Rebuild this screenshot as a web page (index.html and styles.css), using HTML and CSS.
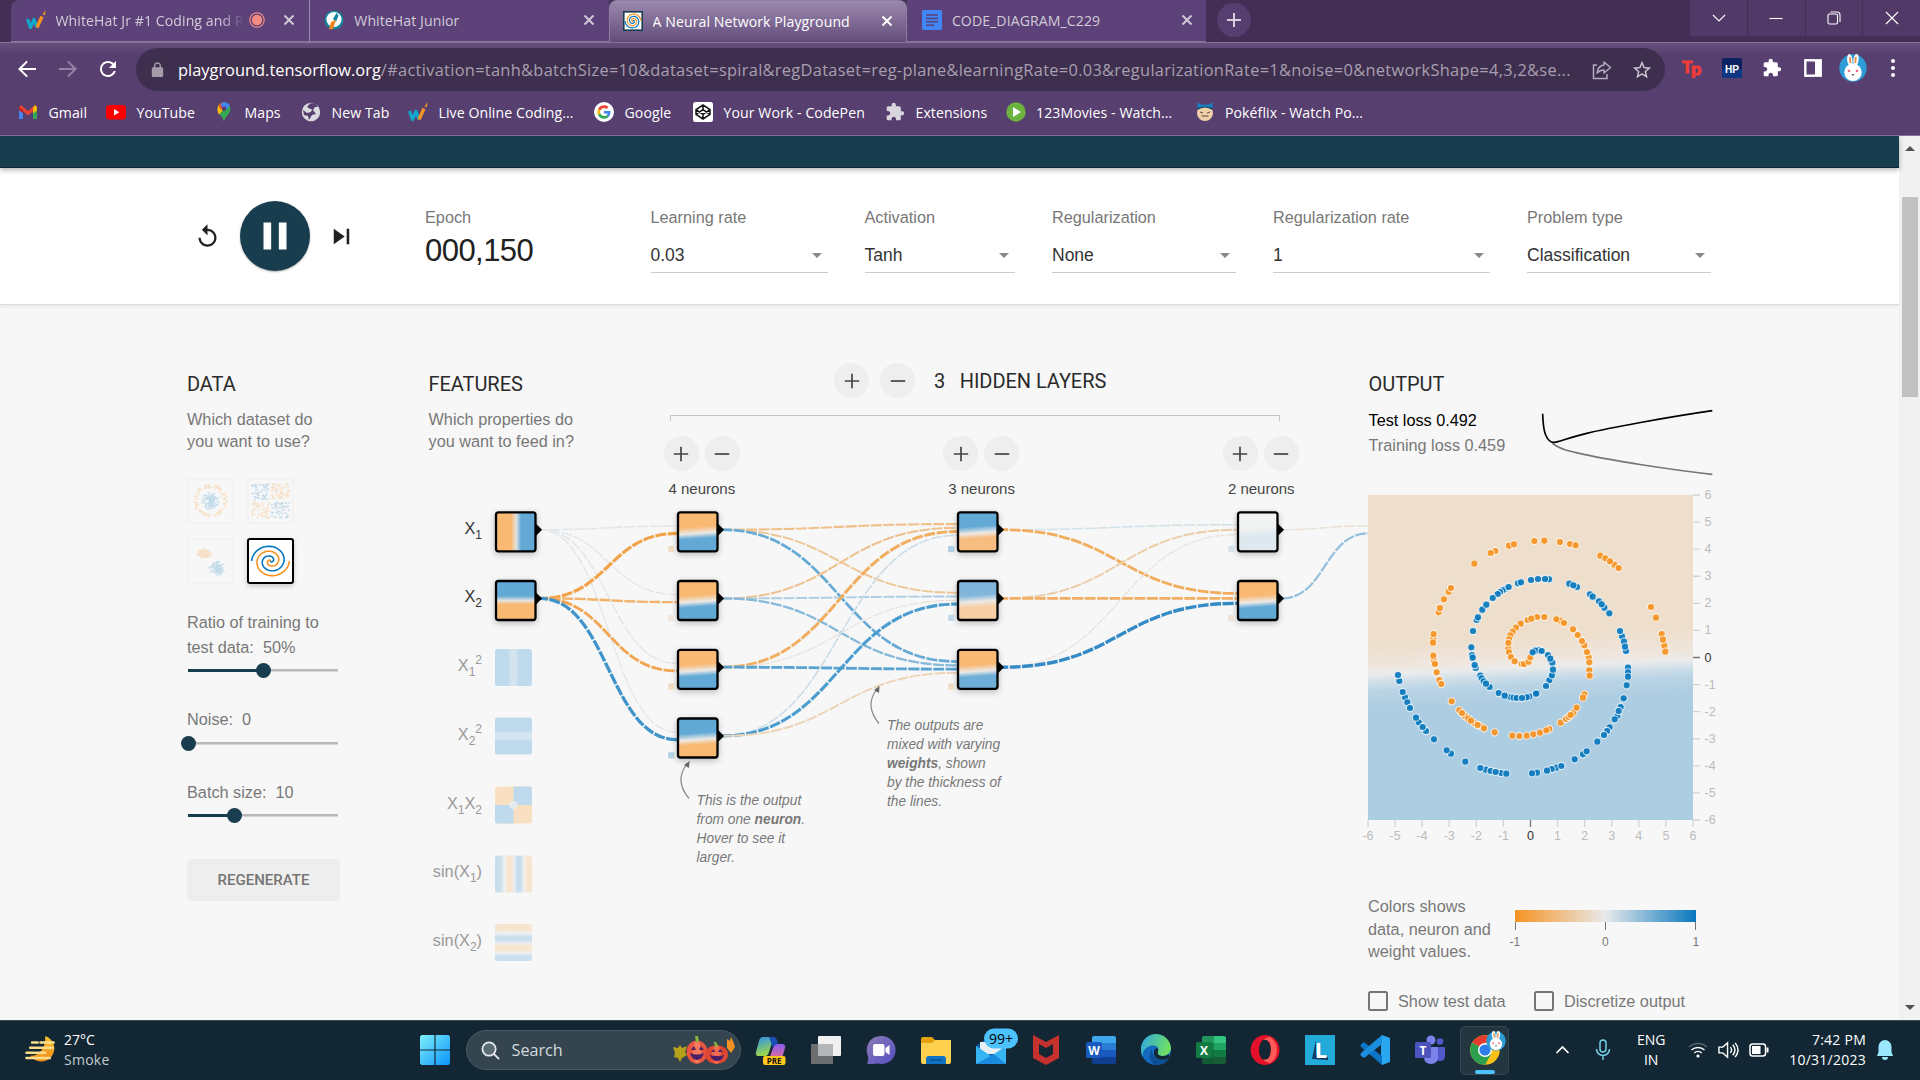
FILE: index.html
```html
<!DOCTYPE html>
<html lang="en">
<head>
<meta charset="utf-8">
<title>A Neural Network Playground</title>
<link rel="stylesheet" href="styles.css">
</head>
<body>
<svg class="defs" width="0" height="0">
  <defs>
    <symbol id="close" viewBox="0 0 12 12"><path d="M1.5 1.5l9 9M10.5 1.5l-9 9" stroke="currentColor" stroke-width="1.9" fill="none"/></symbol>
    <symbol id="whitehat" viewBox="0 0 20 20"><path d="M1.5 9l3 8.500 3.500-8 3 8" fill="none" stroke="#12a9cf" stroke-width="3.200" stroke-linejoin="round"/><path d="M11 17.500l5-11" stroke="#f59322" stroke-width="3.400"/><path d="M16.500 4.500L19.500 0l-.5 5z" fill="#f59322"/></symbol>
    <symbol id="puzzle" viewBox="0 0 24 24"><path fill="currentColor" d="M20.500 11H19V7c0-1.100-.9-2-2-2h-4V3.500C13 2.120 11.880 1 10.500 1S8 2.120 8 3.500V5H4c-1.100 0-1.990.9-1.990 2v3.800H3.500c1.490 0 2.700 1.210 2.700 2.700s-1.210 2.700-2.700 2.700H2V20c0 1.100.9 2 2 2h3.800v-1.500c0-1.490 1.210-2.700 2.700-2.700 1.490 0 2.700 1.210 2.700 2.700V22H17c1.100 0 2-.9 2-2v-4h1.500c1.380 0 2.500-1.120 2.500-2.500S21.880 11 20.500 11z"/></symbol>
    <symbol id="bunny" viewBox="0 0 28 28"><circle cx="14" cy="14" r="13.700" fill="#2e9bd6"/><ellipse cx="10.800" cy="6" rx="2.600" ry="6" fill="#fff" transform="rotate(-6 10.800 6)"/><ellipse cx="17" cy="6" rx="2.600" ry="6" fill="#fff" transform="rotate(8 17 6)"/><path d="M11 3l.5 6M16.800 3l-.5 6" stroke="#f08a3c" stroke-width="1.800"/><circle cx="14" cy="18.300" r="8.700" fill="#fff"/><circle cx="10" cy="17" r="1.300" fill="#ef6a8a"/><circle cx="18" cy="17" r="1.300" fill="#ef6a8a"/><path d="M12.500 20h3L14 22z" fill="#555"/></symbol>
    <symbol id="plus" viewBox="0 0 16 16"><path d="M8 .8v14.400M.8 8h14.400" stroke="currentColor" stroke-width="1.700"/></symbol>
    <symbol id="minus" viewBox="0 0 16 16"><path d="M.8 8h14.400" stroke="currentColor" stroke-width="1.700"/></symbol>
  </defs>
</svg>

<div class="tabstrip">
  <div class="tab first"><svg class="fav"><use href="#whitehat"/></svg><span class="tab-title fade">WhiteHat Jr #1 Coding and R</span>
    <svg class="rec" viewBox="0 0 16 16"><circle cx="8" cy="8" r="5.200" fill="#f28b82"/><circle cx="8" cy="8" r="7.200" fill="none" stroke="#f28b82" stroke-width="1.200"/></svg>
    <svg class="x"><use href="#close"/></svg></div>
  <div class="tab"><svg class="fav" viewBox="0 0 20 20"><circle cx="10" cy="10" r="9.500" fill="#12869c"/><circle cx="10" cy="9.500" r="7.600" fill="#fff"/><path d="M9 9l3.500-6 2 2.500L12 12z" fill="#12869c"/><path d="M7 12l5-2-3 9-4 .5z" fill="#f58220"/></svg><span class="tab-title">WhiteHat Junior</span><svg class="x"><use href="#close"/></svg></div>
  <div class="tab active"><svg class="fav" viewBox="0 0 20 20"><rect x=".8" y=".8" width="18.400" height="18.400" fill="#fff" stroke="#183d4e" stroke-width="1.600"/><path class="spiral-b" fill="none" stroke="#0877bd" stroke-width="1.200"/><path class="spiral-o" fill="none" stroke="#f59322" stroke-width="1.200"/></svg><span class="tab-title">A Neural Network Playground</span><svg class="x"><use href="#close"/></svg></div>
  <div class="tab"><svg class="fav" viewBox="0 0 20 20"><rect width="20" height="20" rx="2" fill="#4285f4"/><path d="M4 5h12M4 8.400h12M4 11.800h12M4 15.200h8" stroke="#5c4278" stroke-width="1.500"/></svg><span class="tab-title">CODE_DIAGRAM_C229</span><svg class="x"><use href="#close"/></svg></div>
  <div class="newtab"><svg viewBox="0 0 16 16"><path d="M8 1v14M1 8h14" stroke="#d8d0df" stroke-width="2"/></svg></div>
  <div class="winbtns">
    <span><svg viewBox="0 0 14 14"><path d="M1 4l6 6 6-6" /></svg></span>
    <span><svg viewBox="0 0 14 14"><path d="M.5 7.500h13"/></svg></span>
    <span><svg viewBox="0 0 14 14"><rect x="1" y="3" width="9.500" height="10" rx="1.500"/><path d="M3.500 1h6.500a3 3 0 0 1 3 3v7"/></svg></span>
    <span><svg viewBox="0 0 14 14"><path d="M1 1l12 12M13 1L1 13"/></svg></span>
  </div>
</div>

<div class="toolbar">
  <div class="nav">
    <svg viewBox="0 0 24 24"><path fill="#fff" d="M21 11H7l5.900-5.900L11.500 3.700 3 12l8.500 8.300 1.400-1.400L7 13H21z"/></svg>
    <svg viewBox="0 0 24 24"><path fill="#9384a3" d="M3 11H17l-5.900-5.900L12.500 3.700 21 12l-8.500 8.300-1.400-1.400L17 13H3z"/></svg>
    <svg viewBox="0 0 24 24"><path fill="#fff" d="M17.650 6.350C16.200 4.900 14.210 4 12 4c-4.420 0-7.990 3.580-7.990 8s3.570 8 7.990 8c3.730 0 6.840-2.550 7.730-6h-2.080c-.82 2.330-3.040 4-5.650 4-3.310 0-6-2.690-6-6s2.690-6 6-6c1.660 0 3.140.69 4.220 1.780L13 11h7V4l-2.350 2.350z"/></svg>
  </div>
  <div class="omnibox">
    <svg class="lock" viewBox="0 0 24 24"><path fill="#a49da9" d="M18 8h-1V6c0-2.760-2.240-5-5-5S7 3.240 7 6v2H6c-1.100 0-2 .9-2 2v10c0 1.100.9 2 2 2h12c1.100 0 2-.9 2-2V10c0-1.100-.9-2-2-2zM9 8V6c0-1.660 1.340-3 3-3s3 1.340 3 3v2z"/></svg>
    <span class="url"><b>playground.tensorflow.org</b>/#activation=tanh&amp;batchSize=10&amp;dataset=spiral&amp;regDataset=reg-plane&amp;learningRate=0.03&amp;regularizationRate=1&amp;noise=0&amp;networkShape=4,3,2&amp;se...</span>
    <svg class="share" viewBox="0 0 20 20"><path d="M5 5H1.500v13.500H15V14" fill="none" stroke="#b5aabf" stroke-width="1.500"/><path d="M12 2l6.500 5.500L12 13v-3c-3 0-5 1-7 3 .5-4 3-7.500 7-8z" fill="none" stroke="#b5aabf" stroke-width="1.500" stroke-linejoin="round"/></svg>
    <svg class="star" viewBox="0 0 24 24"><path fill="#cfc8d6" d="M22 9.240l-7.190-.62L12 2 9.190 8.630 2 9.240l5.460 4.730L5.820 21 12 17.270 18.180 21l-1.630-7.030L22 9.240zM12 15.400l-3.760 2.270 1-4.280-3.320-2.880 4.380-.38L12 6.100l1.710 4.040 4.380.38-3.320 2.880 1 4.280L12 15.400z"/></svg>
  </div>
  <div class="exts">
    <svg viewBox="0 0 20 20"><text x="0" y="15" class="tp">T</text><text x="9" y="17" class="tp">p</text></svg>
    <svg viewBox="0 0 20 20"><rect width="20" height="20" rx="1.500" fill="#0c2562"/><rect y="11" width="20" height="9" fill="#12469b" opacity=".6"/><text x="10" y="14.800" text-anchor="middle" class="hp" textLength="14" lengthAdjust="spacingAndGlyphs">HP</text></svg>
    <svg viewBox="0 0 24 24" color="#fff"><use href="#puzzle"/></svg>
    <svg viewBox="0 0 20 20"><rect x="2.300" y="2.300" width="15.400" height="15.400" fill="none" stroke="#fff" stroke-width="2.400"/><rect x="12" y="2" width="6" height="16" fill="#fff"/></svg>
    <svg class="big"><use href="#bunny"/></svg>
    <svg viewBox="0 0 20 20" fill="#fff"><circle cx="10" cy="3" r="2"/><circle cx="10" cy="10" r="2"/><circle cx="10" cy="17" r="2"/></svg>
  </div>
</div>

<div class="bookmarks">
  <a><svg viewBox="0 0 20 20"><path d="M1 17V5h4v12z" fill="#4285f4"/><path d="M15 17V5h4v12z" fill="#34a853"/><path d="M1 5.500L3 3l7 6 7-6 2 2.500-9 8z" fill="#ea4335"/><path d="M15 6l2-3 2 2v3.500l-4 3z" fill="#fbbc04"/><path d="M1 5l4 3v3.500L1 8z" fill="#c5221f"/></svg>Gmail</a>
  <a><svg viewBox="0 0 20 20"><rect x="0" y="3" width="20" height="14.500" rx="3.500" fill="#f00"/><path d="M8 7v6.400l5.300-3.200z" fill="#fff"/></svg>YouTube</a>
  <a><svg viewBox="0 0 20 20"><path d="M10 20C9 14 3.500 12 3.500 6.800A6.500 6.500 0 0 1 10 .3a6.500 6.500 0 0 1 6.500 6.500C16.500 12 11 14 10 20z" fill="#34a853"/><path d="M3.500 7A6.500 6.500 0 0 1 5.500 2l9 .2L5 12.500C4 11 3.500 9 3.500 7z" fill="#fbbc04"/><path d="M4.600 3.200A6.500 6.500 0 0 1 10 .3L7 8z" fill="#ea4335"/><path d="M10 .3a6.500 6.500 0 0 1 5.800 3.600L11 9 6.500 2.500A6.500 6.500 0 0 1 10 .3z" fill="#4285f4"/><circle cx="10" cy="6.800" r="2.300" fill="#573f6f"/></svg>Maps</a>
  <a><svg viewBox="0 0 20 20"><circle cx="10" cy="10" r="9.200" fill="#dcdce0"/><path d="M9 1.500L6 5l3 2 2 0-1 3-4 1-4-3 1 5 4 1 1 4 3-5 4-1-3-4 2-3 3 0-3-4z" fill="#573f6f"/></svg>New Tab</a>
  <a><svg><use href="#whitehat"/></svg>Live Online Coding...</a>
  <a><svg viewBox="0 0 20 20"><circle cx="10" cy="10" r="10" fill="#fff"/><g transform="translate(3.300 3.300) scale(.28)"><path fill="#EA4335" d="M24 9.500c3.540 0 6.710 1.220 9.210 3.600l6.850-6.850C35.900 2.380 30.470 0 24 0 14.620 0 6.510 5.380 2.560 13.220l7.980 6.190C12.430 13.720 17.740 9.500 24 9.500z"/><path fill="#4285F4" d="M46.980 24.550c0-1.570-.15-3.090-.38-4.550H24v9.020h12.940c-.58 2.960-2.260 5.480-4.780 7.180l7.730 6c4.510-4.180 7.090-10.360 7.090-17.650z"/><path fill="#FBBC05" d="M10.530 28.590c-.48-1.450-.76-2.990-.76-4.590s.27-3.140.76-4.590l-7.980-6.190C.92 16.460 0 20.120 0 24c0 3.880.92 7.540 2.560 10.780l7.970-6.190z"/><path fill="#34A853" d="M24 48c6.480 0 11.930-2.130 15.890-5.810l-7.730-6c-2.150 1.450-4.920 2.300-8.160 2.300-6.260 0-11.570-4.220-13.470-9.910l-7.980 6.190C6.510 42.620 14.620 48 24 48z"/></g></svg>Google</a>
  <a><svg viewBox="0 0 20 20"><rect width="20" height="20" rx="2.500" fill="#fff"/><path d="M10 3l7 4.600v4.800L10 17l-7-4.600V7.600zM3 7.600l7 4.800 7-4.800M3 12.400l7-4.800 7 4.800M10 3v4.600M10 12.400V17" fill="none" stroke="#111" stroke-width="1.500" stroke-linejoin="round"/></svg>Your Work - CodePen</a>
  <a><svg color="#d9d5de"><use href="#puzzle"/></svg>Extensions</a>
  <a><svg viewBox="0 0 20 20"><circle cx="10" cy="10" r="9.700" fill="#6cb33f"/><path d="M7 5v10l8-5z" fill="#fff"/></svg>123Movies - Watch...</a>
  <a><svg viewBox="0 0 20 20"><path d="M2 1l4 1.500h8L18 1l-1 9H3z" fill="#1d7bc0"/><circle cx="10" cy="11" r="8" fill="#f0d0a8"/><path d="M2.500 8q7.500-5 15 0L17 4H3z" fill="#17445f"/><path d="M3 1l4 2h6l4-2v5Q10 3 3 6z" fill="#1d7bc0"/><path d="M5 10l3 1M15 10l-3 1M6.500 14h7" stroke="#5c4a3a" stroke-width="1"/></svg>Pokéflix - Watch Po...</a>
</div>

<div class="viewport">
  <div class="page">
    <header class="banner"></header>
    <section class="controls">
      <div class="timeline">
        <svg class="reset" viewBox="0 0 24 24"><path d="M12 5V1L7 6l5 5V7c3.310 0 6 2.690 6 6s-2.690 6-6 6-6-2.690-6-6H4c0 4.420 3.580 8 8 8s8-3.580 8-8-3.580-8-8-8z"/></svg>
        <div class="play"><svg viewBox="0 0 24 24"><path fill="#fff" d="M6 19h4V5H6v14zm8-14v14h4V5h-4z"/></svg></div>
        <svg class="step" viewBox="0 0 24 24"><path d="M6 18l8.500-6L6 6v12zM16 6v12h2V6h-2z"/></svg>
      </div>
      <div class="epoch"><label>Epoch</label><output>000,150</output></div>
      <div class="field w1"><label>Learning rate</label><div class="select">0.03</div></div>
      <div class="field w2"><label>Activation</label><div class="select">Tanh</div></div>
      <div class="field w3"><label>Regularization</label><div class="select">None</div></div>
      <div class="field w4"><label>Regularization rate</label><div class="select">1</div></div>
      <div class="field w3"><label>Problem type</label><div class="select">Classification</div></div>
    </section>

    <main>
      <section class="data">
        <h4>Data</h4>
        <p>Which dataset do<br>you want to use?</p>
        <div class="datasets">
          <svg id="ds-circle" viewBox="0 0 40 40"></svg><svg id="ds-xor" viewBox="0 0 40 40"></svg>
          <svg id="ds-gauss" viewBox="0 0 40 40"></svg><svg class="selected" viewBox="0 0 20 20"><path class="spiral-b flip" fill="none" stroke="#0877bd" stroke-width=".75"/><path class="spiral-o flip" fill="none" stroke="#f59322" stroke-width=".75"/></svg>
        </div>
        <div class="param">Ratio of training to<br>test data:&nbsp; 50%<div class="slider"><i style="width:50%"></i><b></b></div></div>
        <div class="param">Noise:&nbsp; 0<div class="slider"><i style="width:0%"></i><b></b></div></div>
        <div class="param">Batch size:&nbsp; 10<div class="slider"><i style="width:31%"></i><b></b></div></div>
        <button>Regenerate</button>
      </section>

      <section class="features">
        <h4>Features</h4>
        <p>Which properties do<br>you want to feed in?</p>
        <ul>
          <li class="on">X<sub>1</sub></li><li class="on">X<sub>2</sub></li><li>X<sub>1</sub><sup>2</sup></li><li>X<sub>2</sub><sup>2</sup></li><li>X<sub>1</sub>X<sub>2</sub></li><li>sin(X<sub>1</sub>)</li><li>sin(X<sub>2</sub>)</li>
        </ul>
      </section>

      <section class="layers">
        <div class="layers-head"><span class="round"><svg><use href="#plus"/></svg></span><span class="round"><svg><use href="#minus"/></svg></span><h4><span>3</span>Hidden layers</h4></div>
        <div class="bracket"></div>
        <div class="layer-cols">
          <div><span class="round"><svg><use href="#plus"/></svg></span><span class="round"><svg><use href="#minus"/></svg></span><p>4 neurons</p></div>
          <div><span class="round"><svg><use href="#plus"/></svg></span><span class="round"><svg><use href="#minus"/></svg></span><p>3 neurons</p></div>
          <div><span class="round"><svg><use href="#plus"/></svg></span><span class="round"><svg><use href="#minus"/></svg></span><p>2 neurons</p></div>
        </div>
      </section>

      <section class="result">
        <div class="result-head">
          <div><h4>Output</h4><p class="test">Test loss 0.492</p><p>Training loss 0.459</p></div>
          <svg class="loss" viewBox="600 140 525 210"><path d="M637 248C660 268 690 273 750 286S980 327 1117 342" stroke="#777" /><path d="M608 160C609 190 611 210 617 224S632 247 643 246C660 244 675 235 740 219S980 171 1117 151" stroke="#000"/></svg>
        </div>
        <svg class="heatmap" id="heatmap" viewBox="0 0 353 353">
          <defs><linearGradient id="hm" gradientUnits="userSpaceOnUse" x1="156.500" y1="130" x2="160.600" y2="218"><stop offset="0" stop-color="#eedfcd"/><stop offset=".14" stop-color="#eedfcd"/><stop offset=".26" stop-color="#efe2d5"/><stop offset=".37" stop-color="#efe5dc"/><stop offset=".48" stop-color="#ecebea"/><stop offset=".57" stop-color="#cfdfe9"/><stop offset=".68" stop-color="#b9d3e4"/><stop offset=".88" stop-color="#adcde2"/></linearGradient></defs>
          <rect width="325" height="325" fill="url(#hm)"/>
        </svg>
        <div class="legend"><p>Colors shows<br>data, neuron and<br>weight values.</p>
          <div class="scale"><div class="ramp"></div><div class="ticks"><i></i><i></i><i></i></div><div class="nums"><span>-1</span><span>0</span><span>1</span></div></div></div>
        <div class="checks"><span><i></i>Show test data</span><span><i></i>Discretize output</span></div>
      </section>

      <svg class="network" id="network" viewBox="0 305 1899 715"></svg>
      <div class="callout c1">This is the output<br>from one <b>neuron</b>.<br>Hover to see it<br>larger.</div>
      <div class="callout c2">The outputs are<br>mixed with varying<br><b>weights</b>, shown<br>by the thickness of<br>the lines.</div>
    </main>
  </div>
  <div class="scrollbar"><svg viewBox="0 0 10 6"><path d="M0 6l5-5 5 5z"/></svg><i></i><svg viewBox="0 0 10 6"><path d="M0 0l5 5 5-5z"/></svg></div>
</div>

<div class="taskbar">
  <div class="weather"><svg viewBox="0 0 32 32"><defs><linearGradient id="moon" x2="0" y2="1"><stop offset="0" stop-color="#fbc02d"/><stop offset="1" stop-color="#f08a1c"/></linearGradient></defs><path d="M21 1a14 14 0 1 1-16 21C14 23 22 14 21 1z" fill="url(#moon)"/><path d="M7 8h6M16 8h14M5 13.500h24M1 19h20M1 24.500h25" stroke="#fadf8b" stroke-width="2.600" stroke-linecap="round"/></svg><p>27°C<br><span>Smoke</span></p></div>
  <svg class="start" viewBox="0 0 30 30"><defs><linearGradient id="win" x2="1" y2="1"><stop offset="0" stop-color="#7ff0fb"/><stop offset="1" stop-color="#0a93fb"/></linearGradient></defs><path fill="url(#win)" d="M1.500 0H14.400V14.400H0V1.500zM15.600 0H28.500L30 1.500V14.400H15.600zM0 15.600H14.400V30H1.500L0 28.500zM15.600 15.600H30V28.500L28.500 30H15.600z"/></svg>
  <div class="search"><svg viewBox="0 0 20 20"><circle cx="8.500" cy="8.500" r="7" fill="#5a6a73" stroke="#e6eaec" stroke-width="1.800"/><path d="M13.500 13.500l5 5" stroke="#e6eaec" stroke-width="2" stroke-linecap="round"/></svg><span>Search</span>
    <svg class="pumpkin" viewBox="0 0 62 30"><path d="M0 12l5 1 2-3 2 3 5-2-2 6 2 3-5 3-2 4-2-4-4-1 1-4z" fill="#b7a11b"/><path d="M54 4l3 2 1-4 2 4 2 6-4 6-4-5z" fill="#f59322"/><ellipse cx="24" cy="17" rx="10.500" ry="11.500" fill="#e8553f"/><ellipse cx="24" cy="17" rx="4" ry="11.500" fill="#f47a5c"/><path d="M23 7l-1-6 3 0 1 6z" fill="#8bb63c"/><path d="M18 15l3-4 2 4zM26 15l2-4 3 4zM17 18q7 3 14 0-2 7-7 7t-7-7z" fill="#4a1f66"/><ellipse cx="43.500" cy="19.500" rx="11.500" ry="9.500" fill="#dd4633"/><ellipse cx="43.500" cy="19.500" rx="4.500" ry="9.500" fill="#f26b50"/><path d="M42 12q0-4-2-5h3q2 2 2 5z" fill="#8bb63c"/><path d="M38 17l3-3 1 3zM45 17l2-3 3 3zM37 20q7 2 14 0-2 6-7 6t-7-6z" fill="#4a1f66"/></svg></div>
  <div class="apps">
    <svg viewBox="0 0 30 30"><defs><linearGradient id="cp1" x2=".3" y2="1"><stop offset="0" stop-color="#2a8ff0"/><stop offset="1" stop-color="#9ed84a"/></linearGradient><linearGradient id="cp2" y2="1" x2="0"><stop offset="0" stop-color="#8a5cf0"/><stop offset="1" stop-color="#f4717c"/></linearGradient></defs><path d="M7 2h11l-5 15q-1 4-4 4H3q-4 0-3-4L3 6q1-4 4-4z" fill="url(#cp1)"/><path d="M22 9h4q4 0 3 4l-3 10q-1 4-5 4H12l5-14q1-4 5-4z" fill="url(#cp2)"/><path d="M13 2h5q2 0 3 3l1 4q-4 0-5 4z" fill="#1b4fb5"/><rect x="7" y="21" width="22.500" height="9" rx="2" fill="#ffc61a"/><text x="18.200" y="28.600" text-anchor="middle" class="pre">PRE</text></svg>
    <svg viewBox="0 0 30 30"><rect x="0" y="9" width="22" height="20" rx="1" fill="#6c6e70"/><rect x="7" y="1" width="23" height="20" rx="1" fill="#f1f1f1"/><rect x="7" y="9" width="15" height="12" fill="#b5b6b7"/></svg>
    <svg viewBox="0 0 30 30"><defs><linearGradient id="ch" x2="1" y2="1"><stop offset="0" stop-color="#8d7ab5"/><stop offset="1" stop-color="#5450c4"/></linearGradient></defs><path d="M15 1a14 14 0 1 1-3 27.500Q6 29 1 29q2-4 1-8A14 14 0 0 1 15 1z" fill="url(#ch)"/><rect x="7" y="9" width="11.500" height="12" rx="2" fill="#fff"/><path d="M19.500 13l4-3v10l-4-3z" fill="#fff"/></svg>
    <svg viewBox="0 0 30 30"><path d="M0 4q0-2 2-2h9l3 3v4H0z" fill="#e5a00d"/><path d="M0 8h11l3-3h16v22q0 2-2 2H2q-2 0-2-2z" fill="#fdd04e"/><path d="M5 29v-5q0-3 3-3h14q3 0 3 3v5z" fill="#1173c4"/><path d="M9 25h12" stroke="#0a4f93" stroke-width="1.500"/></svg>
    <svg viewBox="0 0 30 30" class="mail"><path d="M0 11L10 4h10l10 7v18H0z" fill="#0f5ba8"/><path d="M4 7h22v12H4z" fill="#e8eef2"/><path d="M0 11l15 10 15-10v18H0z" fill="#37b5f2"/><path d="M0 29L18 19l12 10z" fill="#1b8be0"/><rect x="8" y="-6.500" width="34" height="20" rx="10" fill="#4cc2ff"/><text x="25" y="9" text-anchor="middle" class="badge">99+</text></svg>
    <svg viewBox="0 0 30 30"><path d="M2 0l13 7L28 0v23l-13 7L2 23zM8 9v10l7 4 7-4V9l-7 4z" fill="#c5312c" fill-rule="evenodd"/></svg>
    <svg viewBox="0 0 30 30"><path d="M8 1h20q2 0 2 2v5H6V3q0-2 2-2z" fill="#41a5ee"/><path d="M6 8h24v7H6z" fill="#2b7cd3"/><path d="M6 15h24v7H6z" fill="#185abd"/><path d="M6 22h24v5q0 2-2 2H8q-2 0-2-2z" fill="#103f91"/><rect y="7" width="16" height="16" rx="1.500" fill="#185abd"/><text x="8" y="19.500" text-anchor="middle" class="ltr">W</text></svg>
    <svg viewBox="0 0 30 30"><defs><linearGradient id="ed" x2="1" y2=".3"><stop offset="0" stop-color="#2ba5e6"/><stop offset="1" stop-color="#6fdf63"/></linearGradient></defs><circle cx="15" cy="15" r="15" fill="#1269bd"/><path d="M0 15A15 15 0 0 1 30 13c0 5-4 8-9 8-4 0-6-2-4-5 2-5-5-7-10-4-4 2-6 6-5 10Q0 19 0 15z" fill="url(#ed)"/><path d="M11 14c-1 7 5 12 12 11 2 0 4-1 5-2-2 4-6 7-12 7C9 30 7 20 11 14z" fill="#0c4f96"/><path d="M16 13c3 3-1 5 2 7s8 1 10-1v4c-7 4-15 1-15-5 0-3 1-4 3-5z" fill="#122733"/></svg>
    <svg viewBox="0 0 30 30"><path d="M8 1h20q2 0 2 2v5H6V3q0-2 2-2z" fill="#33c481"/><path d="M6 8h24v7H6z" fill="#21a366"/><path d="M6 15h24v7H6z" fill="#107c41"/><path d="M6 22h24v5q0 2-2 2H8q-2 0-2-2z" fill="#185c37"/><path d="M6 1h12v28H6z" fill="#0d5c33" opacity=".45"/><rect y="7" width="16" height="16" rx="1.500" fill="#107c41"/><text x="8" y="19.500" text-anchor="middle" class="ltr">X</text></svg>
    <svg viewBox="0 0 30 30"><path fill-rule="evenodd" d="M15 0a14.500 15 0 1 0 .1 0zM15 4.500a6 10.500 0 1 1-.1 0z" fill="#e3122a"/><path d="M20 2a14 15 0 0 1 0 26q-5-1-7-4 7 3 8-9 0-12-8-10 3-3 7-3z" fill="#ff5a57"/></svg>
    <svg viewBox="0 0 30 30"><rect width="30" height="30" fill="#22aad8"/><path d="M7 24l4-19v15l12 2v3z" fill="#173b66"/><text x="16" y="23" text-anchor="middle" class="bigl">L</text></svg>
    <svg viewBox="0 0 30 30"><path d="M22 0l8 3v24l-8 3-1-8V8z" fill="#2aa7f0"/><path d="M1 9l3-2 18 14v9L1 12q-1-1 0-3z" fill="#0b74c4"/><path d="M1 21l3 2L22 9V0L1 18q-1 1 0 3z" fill="#1b8fdd"/></svg>
    <svg viewBox="0 0 30 30"><circle cx="16" cy="5" r="4.500" fill="#7b83eb"/><circle cx="25" cy="6.500" r="3.300" fill="#5059c9"/><path d="M19 12h11v9q0 5-5 5t-6-5z" fill="#5059c9"/><path d="M9 12h14v10q0 7-7 7t-7-7z" fill="#7b83eb"/><rect y="7" width="16" height="16" rx="1.500" fill="#4b53bc"/><text x="8" y="19.500" text-anchor="middle" class="ltr">T</text></svg>
    <div class="running"><svg viewBox="0 0 30 30"><circle cx="15" cy="15" r="14.800" fill="#fbc116"/><path d="M15 15L2.200 7.600A14.800 14.800 0 0 1 27.800 7.600H15z" fill="#e33b2e"/><path d="M2.200 7.600A14.800 14.800 0 0 0 15 29.800L21.500 18.500 15 15z" fill="#2da04f"/><circle cx="15" cy="15" r="7" fill="#fff"/><circle cx="15" cy="15" r="5.600" fill="#2f7be8"/></svg><svg class="mini"><use href="#bunny"/></svg></div>
  </div>
  <div class="tray">
    <svg class="chev" viewBox="0 0 14 10"><path d="M1 8l6-6 6 6" fill="none" stroke="#fff" stroke-width="1.700"/></svg>
    <svg class="mic" viewBox="0 0 16 22"><rect x="5" y="1" width="6" height="12" rx="3"/><path d="M1.500 10a6.500 6.500 0 0 0 13 0M8 17v4"/></svg>
    <p class="lang">ENG<br>IN</p>
    <svg class="wifi" viewBox="0 0 20 18"><path d="M1 6a13 13 0 0 1 18 0" stroke="#56656e"/><path d="M3.500 9a9.500 9.500 0 0 1 13 0M6.300 12a5.500 5.500 0 0 1 7.400 0"/><circle cx="10" cy="15" r="1.600" fill="#fff" stroke="none"/></svg>
    <svg class="vol" viewBox="0 0 22 18"><path d="M1 6h4l5-4.500v15L5 12H1zM13 6q2.500 3 0 6M15.500 3.500q4.500 5.500 0 11M18 1.500q6 7.500 0 15"/></svg>
    <svg class="bat" viewBox="0 0 20 14"><rect x="1" y="1" width="15.500" height="12" rx="2.500"/><rect x="3" y="3" width="8.500" height="8" fill="#fff" stroke="none"/><path d="M18.500 4.500v5" stroke-width="2"/></svg>
    <p class="clock">7:42 PM<br>10/31/2023</p>
    <svg class="bell" viewBox="0 0 16 20"><path d="M8 0a6.500 6.500 0 0 1 6.500 6.500V12L16 16H0l1.500-4V6.500A6.500 6.500 0 0 1 8 0zM5 17h6a3 3 0 0 1-6 0z" fill="#9be7fd"/></svg>
  </div>
</div>
<script src="playground.js"></script>
</body>
</html>
```

FILE: playground.js
```js
const NS = 'http://www.w3.org/2000/svg';
function add(parent, tag, attrs, text) {
  const el = document.createElementNS(NS, tag);
  for (const k in attrs) el.setAttribute(k, attrs[k]);
  if (text !== undefined) el.textContent = text;
  parent.appendChild(el);
  return el;
}

// Spiral icons, drawn in a 20x20 box.
function spiral(p, phase) {
  const pts = [], flip = p.classList.contains('flip');
  for (let i = 0; i <= 80; i++) {
    const r = i / 80 * (flip ? 9 : 8), t = 1.75 * i / 80 * 2 * Math.PI + phase;
    pts.push((10 + r * Math.sin(t)).toFixed(2) + ' ' + (10 + (flip ? .9 : -1) * r * Math.cos(t)).toFixed(2));
  }
  p.setAttribute('d', 'M' + pts.join('L'));
}
document.querySelectorAll('.spiral-b').forEach(p => spiral(p, 0));
document.querySelectorAll('.spiral-o').forEach(p => spiral(p, Math.PI));

// Dataset thumbnails.
let seed = 7;
function rnd() { seed = (seed * 16807) % 2147483647; return seed / 2147483647; }
function gauss() { return (rnd() + rnd() + rnd() + rnd() - 2) * 1.2; }
const BLUE = '#0877bd', ORANGE = '#f59322';
function px(svg, x, y, c) { add(svg, 'rect', { x: x - .9, y: y - .7, width: 1.8, height: 1.4, fill: c }); }
const circle = document.getElementById('ds-circle');
const xor = document.getElementById('ds-xor');
const gs = document.getElementById('ds-gauss');
for (let i = 0; i < 120; i++) {
  let a = rnd() * 6.283, r = 13.500 + rnd() * 4;
  px(circle, 20 + r * Math.cos(a), 20 + r * Math.sin(a), ORANGE);
  a = rnd() * 6.283; r = rnd() * 9;
  px(circle, 20 + r * Math.cos(a), 20 + r * Math.sin(a), BLUE);
  px(gs, 13 + gauss() * 4, 12.500 + gauss() * 3, ORANGE);
  px(gs, 27 + gauss() * 4, 27.500 + gauss() * 4, BLUE);
}
for (let i = 0; i < 280; i++) {
  const x = rnd() * 40 - 20, y = rnd() * 36 - 18;
  if (Math.abs(x) > 1 && Math.abs(y) > 1) px(xor, 20 + x, 20 + y, x * y > 0 ? BLUE : ORANGE);
}

// Network links; rows[source][destination] = [colour, width].
const net = document.getElementById('network');
const defs = add(net, 'defs', {});
const ROW = [529.7, 598.4, 667.2, 735.9];
function layer(sx, dx, step, rows) {
  rows.forEach((dests, s) => dests.forEach((l, d) => {
    const n = rows.length, y0 = ROW[s], y1 = ROW[d] + (s - (n - 1) / 2) * 15 / n, m = (sx + dx) / 2;
    add(net, 'path', { d: `M${sx} ${y0}C${m} ${y0} ${m} ${y1} ${dx} ${y1}`, fill: 'none', stroke: l[0], 'stroke-width': l[1], 'stroke-dasharray': '11 1.500', 'stroke-dashoffset': step });
  }));
}
layer(540, 677, 3, [
  [['#dfe6ea', 1.5], ['#e2e6ea', 1.3], ['#dfe5e9', 1.3], ['#e2e6e9', 1.3]],
  [['#f2a248', 3.2], ['#f1b36c', 2.4], ['#f2a653', 2.9], ['#4094ca', 3.3]]]);
layer(722, 957, 1, [
  [['#efc08a', 2.1], ['#edc897', 2], ['#66aad6', 2.7]],
  [['#eec290', 2.1], ['#accde2', 1.9], ['#85b8d9', 2.3]],
  [['#f1ad60', 3], ['#e9e3db', 1.3], ['#58a3d2', 2.8]],
  [['#cbdce7', 1.6], ['#4b9dcf', 3.1], ['#edd4b5', 1.9]]]);
layer(1002, 1237, 5, [
  [['#d2e0e8', 1.5], ['#f1ac5e', 2.8]],
  [['#ebcda8', 2], ['#f0ae66', 2.7]],
  [['#e8e3dc', 1.3], ['#338ac5', 3.4]]]);
[[0, 525.9, '#e9dfd5', 1.4], [1, 533.4, '#93c0de', 2.2]].forEach(l => {
  const y = ROW[l[0]];
  add(net, 'path', { d: `M1282 ${y}C1325 ${y} 1325 ${l[1]} 1368 ${l[1]}`, fill: 'none', stroke: l[2], 'stroke-width': l[3], 'stroke-dasharray': '11 1.500' });
});

// Nodes.
const O = '#f9b972', B = '#62a9d6';
let gid = 0;
function ramp(dir, stops) {
  const id = 'g' + gid++;
  const g = add(defs, 'linearGradient', { id, x1: dir[0], y1: dir[1], x2: dir[2], y2: dir[3] });
  stops.forEach(s => add(g, 'stop', { offset: s[0], 'stop-color': s[1] }));
  return `url(#${id})`;
}
function node(x, y, fill, bias) {
  add(net, 'rect', { x: x + 1, y: y + 1, width: 39.5, height: 39, rx: 2.5, fill, stroke: '#000', 'stroke-width': 2.3, class: 'node' });
  add(net, 'path', { d: `M${x + 41} ${y + 12.5}l6 6-6 6z`, fill: '#000' });
  if (bias) add(net, 'rect', { x: x - 8.800, y: y + 34.7, width: 6.200, height: 6.200, fill: bias });
}
function tilted(a, b, m) {
  return ramp([.465, 0, .535, 1], [[0, a], [m - .17, a], [m, '#ece9e6'], [m + .13, b], [1, b]]);
}
const NY = [511.3, 580, 648.800, 717.5];
node(495, NY[0], ramp([0, 0, 1, 0], [[0, O], [.38, O], [.51, '#e3e2df'], [.64, B], [1, B]]));
node(495, NY[1], ramp([0, 0, 0, 1], [[0, B], [.38, B], [.5, '#e3e2df'], [.6, O], [1, O]]));
node(677, NY[0], tilted(O, B, .54), '#f0dcc5');
node(677, NY[1], tilted(O, B, .53), '#eee4dc');
node(677, NY[2], tilted(O, B, .54), '#f0dcc5');
node(677, NY[3], tilted(B, O, .54), '#b5d1e4');
node(957, NY[0], tilted(B, '#f7bd80', .53), '#b0cfe4');
node(957, NY[1], tilted('#81b6da', '#f6cfa6', .53), '#c0d7e7');
node(957, NY[2], tilted(O, '#6daed8', .55), '#f0dcc5');
node(1237, NY[0], ramp([.47, 0, .53, 1], [[0, '#f1f2f2'], [.4, '#f1f2f2'], [.6, '#dee9ef'], [1, '#dee9ef']]), '#d5e1e9');
node(1237, NY[1], tilted(O, B, .54), '#eee2d6');

// Inactive feature previews.
const LB = '#bfdaec', LO = '#fae0c3', LW = '#d5e5f0';
function small(y, fill) { return add(net, 'rect', { x: 495, y, width: 37, height: 37, rx: 2.500, fill }); }
small(649, ramp([0, 0, 1, 0], [[0, LB], [.35, LB], [.44, LW], [.56, LW], [.65, LB], [1, LB]]));
small(717.5, ramp([0, 0, 0, 1], [[0, LB], [.35, LB], [.44, LW], [.56, LW], [.65, LB], [1, LB]]));
small(786.5, LO);
add(net, 'path', { d: 'M513.500 786.500h16a2.500 2.500 0 0 1 2.500 2.500v16h-18.500zM513.500 805v18.500h-16a2.500 2.500 0 0 1-2.500-2.500v-16z', fill: LB });
add(net, 'circle', { cx: 513.5, cy: 805, r: 4, fill: '#e5ebee' });
small(855.5, ramp([0, 0, 1, 0], [[0, '#c7dfed'], [.16, '#cde0eb'], [.25, '#eef1f2'], [.34, '#f8e5cf'], [.44, '#f8e5cf'], [.51, '#eceff0'], [.6, '#c7dfed'], [.7, '#c7dfed'], [.78, '#eef1f2'], [.86, '#f8e5cf'], [1, '#f8e5cf']]));
small(924, ramp([0, 0, 0, 1], [[0, '#f8e5cf'], [.16, '#f8e5cf'], [.25, '#eef1f2'], [.36, '#c7dfed'], [.44, '#cde0eb'], [.52, '#eceff0'], [.6, '#f8e5cf'], [.7, '#f8e5cf'], [.78, '#eef1f2'], [.86, '#cbe0ed'], [1, '#cbe0ed']]));

// Callout arrows.
[[689, 798.500, 761], [879, 723.500, 686]].forEach(a => {
  add(net, 'path', { d: `M${a[0]} ${a[1]}Q${a[0] - 15} ${a[1] - 18} ${a[0] - 2} ${a[2] + 3}`, fill: 'none', stroke: '#888', 'stroke-width': 1.2 });
  add(net, 'path', { d: `M${a[0] + .5} ${a[2]}l-5.500 4 5 3z`, fill: '#666' });
});

// Output points on the heatmap, in thirds of a pixel.
const hm = document.getElementById('heatmap');
const orange = '403,611 466,573 452,579 507,557 522,553 583,543 613,542 660,546 690,552 707,556 781,587 796,595 823,614 810,604 836,624 933,741 948,773 965,822 973,857 969,839 976,875 326,695 333,684 312,718 296,757 300,744 280,835 281,822 279,848 282,903 285,912 280,887 290,937 298,960 304,972 335,1024 358,1051 375,1068 366,1059 385,1076 405,1090 393,1082 422,1099 413,1095 432,1105 464,1117 517,1127 538,1128 560,1127 580,1123 600,1118 628,1107 619,1111 662,1088 678,1077 686,1071 700,1058 692,1065 710,1043 733,1003 729,1013 748,931 749,947 746,892 748,907 741,876 733,856 726,843 713,825 699,808 661,782 672,789 649,778 591,771 613,771 563,780 574,776 542,791 528,803 518,815 511,826 507,838 505,865 505,849 507,877 513,891 524,904 545,912 552,912 566,905 571,892';
const blue = '178,963 174,945 195,1012 188,996 202,1027 210,1044 236,1087 228,1073 258,1113 248,1101 282,1138 333,1181 320,1171 376,1205 437,1229 421,1224 452,1233 483,1239 467,1236 499,1241 591,1238 576,1240 649,1223 635,1227 621,1232 664,1218 704,1198 729,1183 740,1174 772,1145 809,1102 801,1113 792,1125 832,1068 824,1078 842,1041 836,1053 851,1015 860,976 864,923 864,937 864,950 858,873 846,829 852,845 855,860 840,813 777,724 793,743 785,733 808,760 750,703 758,710 688,671 711,681 700,676 627,658 615,657 594,657 573,660 534,670 543,667 496,687 488,691 506,681 480,696 473,702 458,714 427,749 439,734 410,780 414,772 399,813 394,862 396,885 398,893 407,924 404,915 421,947 425,955 431,964 449,981 438,971 476,999 505,1010 513,1012 521,1013 494,1007 568,1010 560,1012 530,1014 546,1014 592,1000 588,1001 632,955 628,961 618,978 636,946 637,908 639,929 624,885 631,896 596,870 586,872 578,877 605,873';
[[orange, ORANGE], [blue, BLUE]].forEach(s => s[0].split(' ').forEach(p => {
  const [x, y] = p.split(',');
  add(hm, 'circle', { cx: (x - 84) / 3, cy: (y - 405) / 3, r: 3.600, fill: s[1], stroke: '#fff', 'stroke-width': 1.1, 'stroke-opacity': .75, 'fill-opacity': .92 });
}));

// Axes.
for (let v = -6; v <= 6; v++) {
  const p = (v + 6) * 325 / 12, q = 325 - p, zero = v === 0;
  add(hm, 'path', { d: `M325 ${q}h7M${p} 325v7`, stroke: zero ? '#777' : '#d4d4d4', 'stroke-width': 1.3 });
  add(hm, 'text', { x: 336.500, y: q + 4, class: zero ? 'zero' : '' }, v);
  add(hm, 'text', { x: p, y: 345, 'text-anchor': 'middle', class: zero ? 'zero' : '' }, v);
}
```

FILE: styles.css
```css
* { box-sizing: border-box; }
body { margin: 0; width: 1920px; height: 1080px; overflow: hidden; display: flex; flex-direction: column; font-family: "Liberation Sans", sans-serif; background: #f7f7f7; }
.defs { position: absolute; }
p, h4, ul { margin: 0; padding: 0; }
svg { display: block; flex: none; }

/* tab strip */
.tabstrip { height: 42px; flex: none; display: flex; align-items: stretch; background: #432f55; padding-left: 11px; font-family: "Open Sans", sans-serif; font-size: 14.1px; color: #d3cbd9; }
.tab { width: 298.800px; background: #5c4278; display: flex; align-items: center; padding: 0 13.500px 1px 14.500px; border-bottom: 1px solid #84749a; }
.tab.first { border-radius: 8px 0 0 0; border-right: 1px solid #9a8aac; }
.tab.active { background: linear-gradient(#9c88ae, #634d7b); border: 1px solid #8f80a0; border-bottom: 0; border-radius: 8px 8px 0 0; color: #fff; padding-left: 13px; }
.fav { width: 20px; height: 20px; margin-right: 10px; }
.tab-title { flex: 1; white-space: nowrap; overflow: hidden; letter-spacing: .08px; }
.fade { -webkit-mask: linear-gradient(90deg, #000 88%, transparent); mask: linear-gradient(90deg, #000 88%, transparent); }
.rec { width: 16px; height: 16px; margin: 0 18.500px 0 5px; }
.x { width: 12px; height: 12px; }
.newtab { width: 34px; height: 34px; border-radius: 50%; background: #573e70; margin: 3px 0 0 11px; display: grid; place-items: center; }
.newtab svg { width: 16px; }
.winbtns { margin-left: auto; display: flex; gap: 1px; height: 36px; }
.winbtns span { width: 56.700px; background: #523a68; display: grid; place-items: center; }
.winbtns svg { width: 14px; fill: none; stroke: #fff; stroke-width: 1.100; }

/* toolbar */
.toolbar { height: 49px; flex: none; display: flex; padding-top: 6px; background: linear-gradient(#664f7d, #573f6f 12px); border-top: 1px solid #84749a; }
.nav { width: 135.500px; display: flex; gap: 16.500px; padding: 8px 0 0 15px; }
.nav svg { width: 24px; height: 24px; }
.omnibox { width: 1529.500px; height: 43px; margin-top: -1px; border-radius: 22px; background: #3f2f4e; display: flex; align-items: center; padding: 0 12px; }
.lock { width: 17px; height: 18px; margin: 0 12.500px 0 1px; }
.url { flex: 1; font-family: "Open Sans", sans-serif; font-size: 16.400px; color: #a89fb0; white-space: nowrap; overflow: hidden; letter-spacing: .3px; }
.url b { font-weight: 400; color: #fff; letter-spacing: 0; }
.share { width: 20px; height: 20px; margin-right: 19px; }
.star { width: 22px; height: 22px; }
.exts { flex: 1; display: flex; align-items: center; justify-content: space-between; padding: 0 17px 5px 17px; }
.exts svg { width: 20px; height: 20px; }
.exts .big { width: 28px; height: 28px; margin: 0 -4px; }
.tp { font: 700 17px "Liberation Sans", sans-serif; fill: #f23c36; stroke: #f23c36; stroke-width: 1; }
.hp { font: 700 11px "Liberation Sans", sans-serif; fill: #fff; }

/* bookmarks */
.bookmarks { height: 45px; flex: none; display: grid; grid-template-columns: 88px 108px 87px 107px 186px 99px 192px 120.500px 189px auto; padding: 0 0 2px 18px; background: #573f6f; border-bottom: 1px solid #84749a; font: 14.1px "Open Sans", sans-serif; color: #fff; }
.bookmarks a { display: flex; align-items: center; gap: 10.500px; white-space: nowrap; letter-spacing: .08px; }
.bookmarks svg { width: 20px; height: 20px; }

/* page */
.viewport { flex: 1; min-height: 0; display: flex; }
.page { width: 1899px; }
.banner { height: 32px; background: #183d4e; border-bottom: 1px solid #0e2733; position: relative; box-shadow: 0 2px 5px rgba(0,0,0,.3); }
.controls { height: 137px; background: #fff; border-bottom: 1px solid #dcdcdc; box-shadow: 0 2px 4px rgba(0,0,0,.06); display: flex; gap: 37px; padding: 39px 0 0 190px; }
.controls label { display: block; font-size: 16.250px; line-height: 20px; color: #777; }
.timeline { display: flex; align-items: center; width: 198px; height: 70px; margin-top: -6px; }
.reset { width: 27px; height: 27px; margin: 0 19px 0 3.500px; fill: #212121; }
.play { width: 70px; height: 70px; border-radius: 50%; background: #183d4e; display: grid; place-items: center; box-shadow: 0 1px 2px rgba(0,0,0,.3); }
.play svg { width: 46px; height: 46px; }
.step { width: 31px; height: 31px; margin-left: 16.500px; fill: #212121; }
.epoch { width: 188.500px; }
.epoch output { display: block; font-size: 31px; line-height: 34px; margin-top: 7px; color: #212121; letter-spacing: -.55px; }
.select { margin-top: 15px; height: 31px; font-size: 17.500px; line-height: 24px; color: #333; border-bottom: 1px solid #ccc; display: flex; justify-content: space-between; padding-top: 1px; }
.select::after { content: ""; border: 5px solid transparent; border-top-color: #8a8a8a; border-bottom: 0; margin: 10px 6px 0 0; height: 0; }
.w1 { width: 177px; } .w2 { width: 150.500px; } .w3 { width: 184px; } .w4 { width: 217px; }

main { position: relative; display: grid; grid-template-columns: 241.500px 235px 704.500px 360px; padding: 65px 0 0 187px; height: 715px; overflow: hidden; color: #777; font-size: 16.250px; line-height: 22px; }
h4 { font: 400 20px/28px Roboto, sans-serif; color: #2a2a2a; text-transform: uppercase; letter-spacing: -.05px; }
.data h4 + p, .features h4 + p { margin-top: 10px; }
.datasets { display: grid; grid-template-columns: 47px 47px; gap: 13.500px 13px; margin: 26px 0 26px; }
.datasets svg { width: 47px; height: 46px; border: 2px solid rgba(0,0,0,.1); border-radius: 3px; padding: 2px; opacity: .22; }
.datasets .selected { opacity: 1; border-color: #000; background: #fff; box-shadow: 0 2px 5px rgba(0,0,0,.2); padding: 0; }
.param { line-height: 25px; margin-bottom: 26.500px; }
.slider { width: 150px; height: 20px; margin: 1px 0 0 1px; display: flex; align-items: center; background: linear-gradient(#b9b9b9, #b9b9b9) 0 50% / 100% 2.500px no-repeat; }
.slider i { height: 2.500px; background: #183d4e; }
.slider b { width: 15px; height: 15px; border-radius: 50%; background: #183d4e; margin-left: -7.500px; }
button { width: 153px; height: 42px; margin-top: 7px; border: 0; border-radius: 3px; background: #eee; color: #757575; font: 500 15px Roboto, sans-serif; text-transform: uppercase; }
.features ul { list-style: none; width: 53.500px; margin-top: 44.600px; }
.features li { height: 68.750px; line-height: 63px; text-align: right; white-space: nowrap; color: #999; }
.features .on { color: #333; }
sub, sup { font-size: 12px; line-height: 0; position: relative; vertical-align: baseline; }
sub { top: 5px; } sup { top: -7px; }

.layers-head { display: flex; align-items: center; padding-left: 170.500px; margin-top: -7px; height: 35px; gap: 11px; }
.layers-head h4 { margin-left: 8px; white-space: nowrap; }
.layers-head h4 span { margin-right: 14.500px; }
.round { display: inline-grid; place-items: center; width: 35px; height: 35px; border-radius: 50%; background: #eee; color: #444; }
.round svg { width: 16px; height: 16px; }
.bracket { width: 610px; height: 6px; margin: 17px 0 15px 6.500px; border: 1px solid #c4c4c4; border-bottom: 0; }
.layer-cols { display: grid; grid-template-columns: 279.700px 279.700px 120px; }
.layer-cols .round + .round { margin-left: 6px; }
.layer-cols p { font-size: 15px; line-height: 20px; margin: 8px 0 0 5px; color: #444; }

.result-head { display: flex; justify-content: space-between; height: 125px; }
.result-head p { line-height: 25.300px; }
.result-head p:nth-child(2) { margin-top: 9.500px; }
.result-head .test { color: #000; }
.result-head > div { white-space: nowrap; padding-left: .5px; }
.loss { width: 175px; height: 70px; margin: 36.700px 13px 0 0; fill: none; stroke-width: 5; }
.heatmap { width: 353px; height: 353px; margin-left: -.5px; overflow: visible; font-size: 12.500px; }
.heatmap text { fill: #bbb; }
.heatmap .zero { fill: #333; }
.legend { display: flex; gap: 24px; margin-top: 47px; line-height: 22.700px; white-space: nowrap; }
.scale { width: 181px; margin-top: 15px; }
.ramp { height: 12px; background: linear-gradient(90deg, #f59322, #e8eaeb, #0877bd); }
.ticks, .nums { display: flex; justify-content: space-between; }
.ticks i { width: 1px; height: 8px; background: #777; }
.nums { font-size: 12px; line-height: 20px; margin: 2px -10px; }
.nums span { width: 20px; text-align: center; }
.checks { display: flex; gap: 29px; margin-top: 27px; white-space: nowrap; }
.checks span { display: flex; align-items: center; gap: 10px; }
.checks i { flex: none; width: 20px; height: 20px; border: 2.500px solid #757575; border-radius: 2.500px; }
.checks span:first-child { width: 137px; }

/* diagram canvas lies over the feature and layer columns */
.network { position: absolute; left: 0; top: 0; width: 1899px; height: 715px; pointer-events: none; }
.node { filter: drop-shadow(0 2px 3px rgba(0,0,0,.25)); }
.callout { position: absolute; font-size: 13.750px; line-height: 19.050px; font-style: italic; color: #777; white-space: nowrap; }
.c1 { left: 696.500px; top: 485.500px; }
.c2 { left: 887px; top: 411px; }

.scrollbar { width: 21px; background: #f1f1f1; display: flex; flex-direction: column; align-items: center; padding: 9px 0; }
.scrollbar svg { width: 10px; height: 6px; fill: #505050; }
.scrollbar i { width: 16px; height: 200px; background: #c1c1c1; margin: 46px 0 auto; }

/* taskbar */
.taskbar { height: 60px; flex: none; display: flex; align-items: center; background: #122733; border-top: 1px solid #3b4a53; padding-bottom: 1px; color: #fff; font: 14px/20px "Open Sans", sans-serif; }
.weather { display: flex; align-items: center; width: 394.500px; margin-left: 25px; gap: 8px; }
.weather svg { width: 31px; height: 30px; }
.weather p { margin-top: -1px; }
.weather span { color: #c3cbcf; letter-spacing: .25px; }
.start { width: 30px; height: 30px; }
.search { width: 275px; height: 40px; margin-left: 16px; border-radius: 20px; background: #34454f; border: 1px solid #4a5a63; display: flex; align-items: center; padding: 0 5px 0 14px; gap: 12px; font-size: 16.200px; color: #d3d9dc; }
.search svg { width: 19px; height: 19px; }
.search .pumpkin { width: 62px; height: 30px; margin-left: auto; }
.apps { display: flex; align-items: center; gap: 24.950px; margin-left: 15.500px; }
.apps > svg { width: 30px; height: 30px; overflow: visible; }
.running { position: relative; width: 49px; height: 49px; margin-left: -10px; border-radius: 5px; background: #243741; border: 1px solid #34464f; display: grid; place-items: center; }
.running > svg { width: 30px; height: 30px; }
.running .mini { position: absolute; width: 20px; height: 20px; right: 2px; top: 4px; }
.running::after { content: ""; position: absolute; width: 20px; height: 3.500px; border-radius: 2px; background: #4cc2ff; bottom: 0; left: 14px; }
.pre { font: 700 8px "Open Sans", sans-serif; fill: #111; }
.badge { font: 14px "Open Sans", sans-serif; fill: #000; }
.ltr { font: 700 12px "Open Sans", sans-serif; fill: #fff; }
.bigl { font: 700 22px "Open Sans", sans-serif; fill: #fff; }
.tray { margin-left: auto; display: flex; align-items: center; padding-right: 27px; }
.tray svg { fill: none; stroke: #fff; stroke-width: 1.500; }
.tray .chev { width: 15px; height: 10px; margin-right: 25px; }
.tray .mic { width: 16px; height: 22px; stroke: #76cfe6; margin-right: 25px; }
.tray p { white-space: nowrap; margin-top: -1px; }
.lang { text-align: center; width: 30px; margin-right: 22px; }
.wifi { width: 20px; height: 18px; margin-right: 10px; }
.vol { width: 21px; height: 18px; margin-right: 10px; }
.bat { width: 20px; height: 14px; margin-right: 20px; }
.clock { text-align: right; margin-right: 11px; letter-spacing: .25px; }
.tray .bell { width: 16px; height: 20px; stroke: none; }
```
